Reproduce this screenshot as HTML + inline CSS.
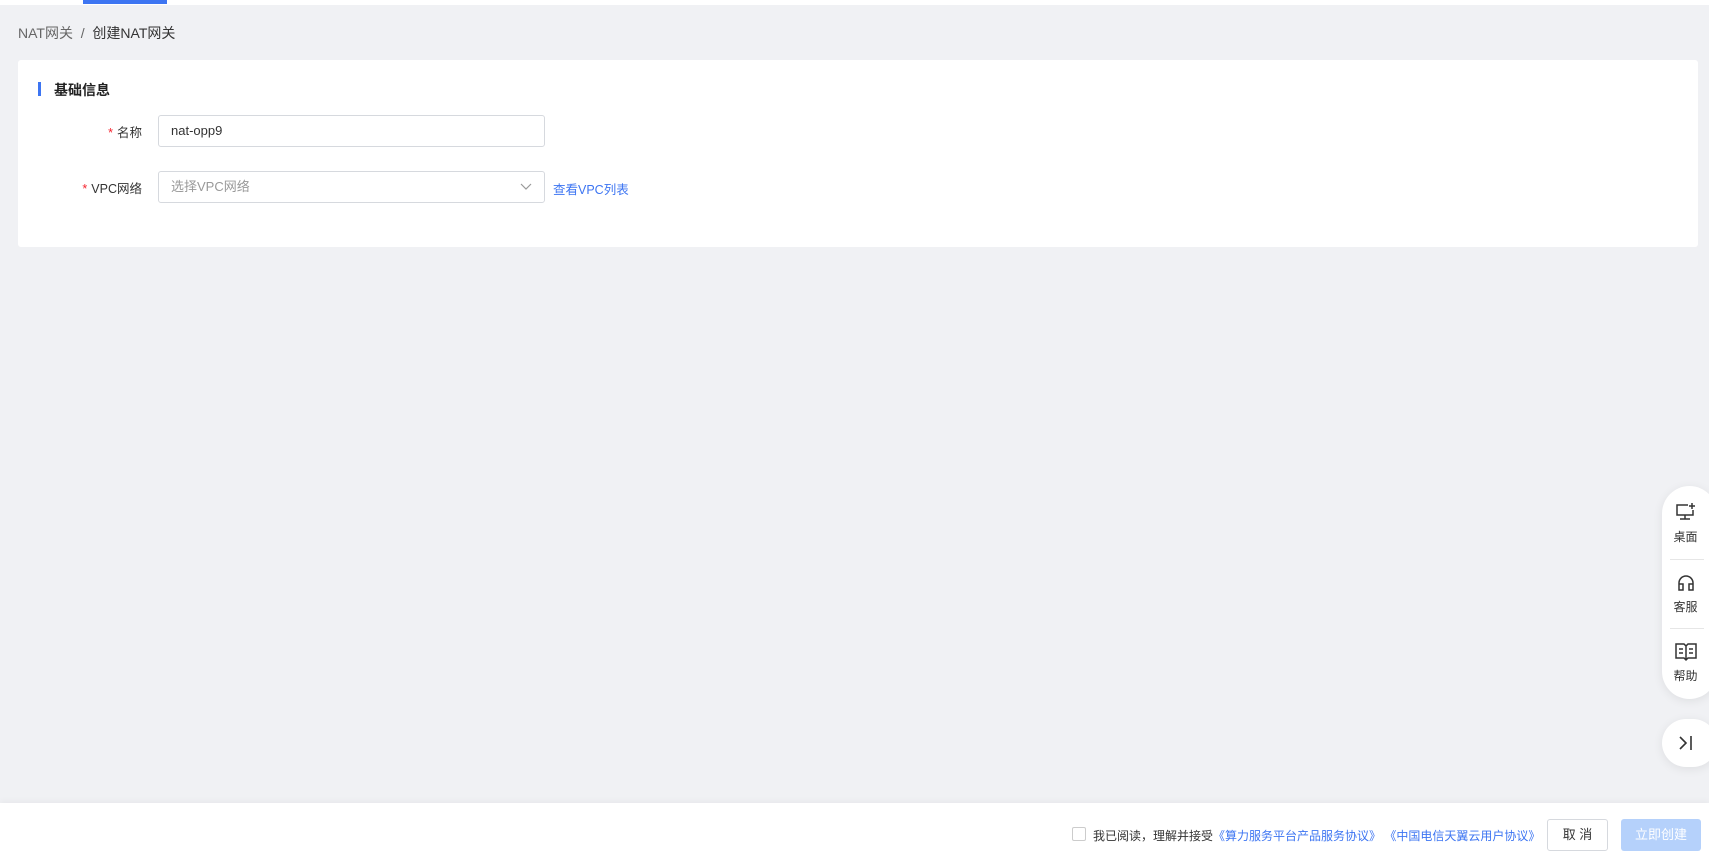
<!DOCTYPE html>
<html><head><meta charset="utf-8"><style>
*{box-sizing:border-box;margin:0;padding:0}
body{width:1709px;height:862px;overflow:hidden;background:#f0f1f4;font-family:"Liberation Sans","Noto Sans CJK SC",sans-serif;position:relative;color:#333;font-size:13px}
.abs{position:absolute}
.topline{left:0;top:0;width:1709px;height:5px;background:#fff}
.tab{left:83px;top:0;width:84px;height:4px;background:#3d75f2}
.crumb{left:18px;top:23px;font-size:14px;color:#666}
.crumb b{font-weight:normal;color:#333}
.card{left:18px;top:60px;width:1680px;height:187px;background:#fff;border-radius:3px}
.ttl{left:38px;top:82px;width:3px;height:14px;background:#3d75f2}
.ttlt{left:54px;top:80px;font-size:14px;font-weight:bold;color:#222}
.lbl{width:142px;text-align:right;left:0;font-size:12.5px;color:#333}
.lbl i{color:#f5222d;font-style:normal;margin-right:4px}
.inp{left:158px;width:387px;height:32px;border:1px solid #d6d9de;border-radius:3px;padding-left:12px;line-height:30px;font-size:13px;background:#fff}
.link{color:#3d75f2}
.float{left:1662px;top:486px;width:55px;height:213px;background:#fff;border-radius:28px;box-shadow:0 2px 10px rgba(0,0,0,.08)}
.fi{position:absolute;left:0;width:47px;text-align:center;font-size:12px;color:#333}
.sep{position:absolute;left:8px;width:34px;height:1px;background:#e6e6e6}
.tog{left:1662px;top:719px;width:55px;height:48px;background:#fff;border-radius:24px;box-shadow:0 2px 10px rgba(0,0,0,.08)}
.footer{left:0;top:803px;width:1709px;height:59px;background:#fff;box-shadow:0 -2px 6px rgba(0,0,0,.04)}
.btn{height:32px;border-radius:3px;text-align:center;line-height:30px;font-size:13px}
</style></head><body>
<div class="abs topline"></div><div class="abs tab"></div>
<div class="abs crumb">NAT网关 &nbsp;/&nbsp; <b>创建NAT网关</b></div>
<div class="abs card"></div>
<div class="abs ttl"></div><div class="abs ttlt">基础信息</div>
<div class="abs lbl" style="top:122px"><i>*</i>名称</div>
<div class="abs inp" style="top:115px;color:#333">nat-opp9</div>
<div class="abs lbl" style="top:178px"><i>*</i>VPC网络</div>
<div class="abs inp" style="top:171px;color:#999">选择VPC网络
<svg style="position:absolute;right:12px;top:11px" width="12" height="8" viewBox="0 0 12 8"><path d="M1 1l5 5 5-5" fill="none" stroke="#999" stroke-width="1.2"/></svg></div>
<div class="abs link" style="left:553px;top:179px;font-size:12.5px">查看VPC列表</div>

<div class="abs float">
<svg style="position:absolute;left:13px;top:16px" width="22" height="20" viewBox="0 0 22 20"><path d="M13 3H2v10h16V8M10 13v4M5 17h10M17 1v6M14 4h6" fill="none" stroke="#333" stroke-width="1.5"/></svg>
<div class="fi" style="top:42px">桌面</div>
<div class="sep" style="top:73px"></div>
<svg style="position:absolute;left:14px;top:87px" width="20" height="20" viewBox="0 0 20 20"><path d="M3 15V10a7 7 0 0 1 14 0v5M3 11h4v6H3zM13 11h4v6h-4z" fill="none" stroke="#333" stroke-width="1.5"/></svg>
<div class="fi" style="top:112px">客服</div>
<div class="sep" style="top:142px"></div>
<svg style="position:absolute;left:13px;top:156px" width="22" height="20" viewBox="0 0 22 20"><path d="M1 2h8l2 2 2-2h8v14h-8l-2 2-2-2H1zM11 4v14M4 7h4M4 11h4M14 7h4M14 11h4" fill="none" stroke="#333" stroke-width="1.5"/></svg>
<div class="fi" style="top:181px">帮助</div>
</div>
<div class="abs tog"><svg style="position:absolute;left:16px;top:16px" width="16" height="16" viewBox="0 0 16 16"><path d="M2 2l6 6-6 6M13 1v14" fill="none" stroke="#333" stroke-width="1.6"/></svg></div>

<div class="abs footer"></div>
<div class="abs" style="left:1072px;top:827px;width:14px;height:14px;border:1px solid #ccc;border-radius:2px;background:#fff"></div>
<div class="abs" style="left:1093px;top:827px;font-size:12px;color:#333">我已阅读，理解并接受<span class="link">《算力服务平台产品服务协议》 《中国电信天翼云用户协议》</span></div>
<div class="abs btn" style="left:1547px;top:819px;width:61px;border:1px solid #d6d9de;background:#fff;color:#333">取 消</div>
<div class="abs btn" style="left:1621px;top:819px;width:80px;background:#b5d1fb;color:#fff;line-height:32px">立即创建</div>
</body></html>
